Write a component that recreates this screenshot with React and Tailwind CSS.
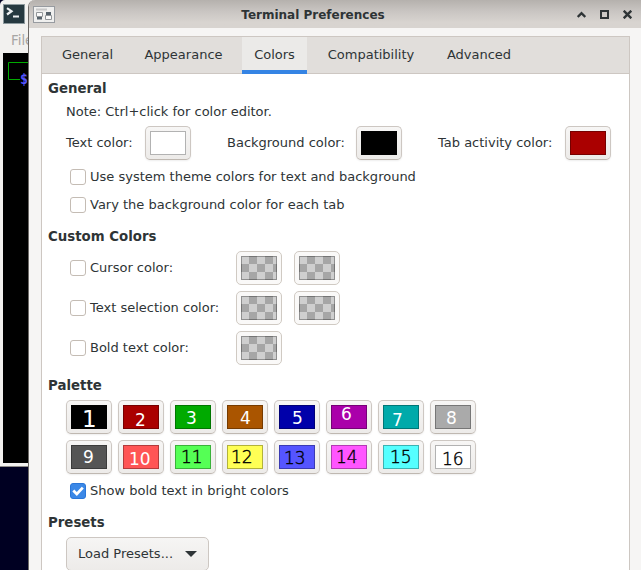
import React from "react";

const PALETTE = [
  { n: 1, fill: "bg-[#000000]", label: "left-[15px] top-[7px] text-[23px] text-white" },
  { n: 2, fill: "bg-[#aa0000]", label: "left-[16px] top-[11px] text-[17px] text-white" },
  { n: 3, fill: "bg-[#00aa00]", label: "left-[15px] top-[9px] text-[17px] text-white" },
  { n: 4, fill: "bg-[#aa5500]", label: "left-[17px] top-[9px] text-[17px] text-white" },
  { n: 5, fill: "bg-[#0000aa]", label: "left-[17px] top-[9px] text-[17px] text-white" },
  { n: 6, fill: "bg-[#aa00aa]", label: "left-[14px] top-[5px] text-[17px] text-white" },
  { n: 7, fill: "bg-[#00aaaa]", label: "left-[13px] top-[11px] text-[17px] text-white" },
  { n: 8, fill: "bg-[#aaaaaa]", label: "left-[15px] top-[9px] text-[17px] text-white" },
  { n: 9, fill: "bg-[#555555]", label: "left-[16px] top-[8px] text-[17px] text-white" },
  { n: 10, fill: "bg-[#ff5555]", label: "left-[10px] top-[10px] text-[17px] text-white" },
  { n: 11, fill: "bg-[#55ff55]", label: "left-[10px] top-[8px] text-[17px] font-extralight text-black [-webkit-text-stroke:0.4px]" },
  { n: 12, fill: "bg-[#ffff55]", label: "left-[8px] top-[8px] text-[17px] font-extralight text-black [-webkit-text-stroke:0.4px]" },
  { n: 13, fill: "bg-[#5555ff]", label: "left-[9px] top-[9px] text-[17px] font-extralight text-black [-webkit-text-stroke:0.4px]" },
  { n: 14, fill: "bg-[#ff55ff]", label: "left-[9px] top-[8px] text-[17px] font-extralight text-black [-webkit-text-stroke:0.4px]" },
  { n: 15, fill: "bg-[#55ffff]", label: "left-[11px] top-[8px] text-[17px] font-extralight text-black [-webkit-text-stroke:0.4px]" },
  { n: 16, fill: "bg-[#ffffff]", label: "left-[11px] top-[10px] text-[17px] font-extralight text-black [-webkit-text-stroke:0.4px]" },
];

const CHECKER =
  "bg-[repeating-conic-gradient(#a6a6a6_0_25%,#cfcfcf_0_50%)] bg-[length:16px_16px]";

function ColorButton({ fill, plain, children }) {
  return (
    <button
      className={`relative h-[34px] w-[46px] shrink-0 rounded-[5px] border p-1 ${
        plain
          ? "border-[#d0cac3] bg-[#faf9f8]"
          : "border-[#cdc7c2] border-b-[#bfb8b1] bg-linear-to-b from-[#f7f6f5] to-[#edebe9] shadow-[0_1px_2px_rgba(0,0,0,0.07)]"
      }`}
    >
      <span className={`block h-6 w-9 shadow-[inset_0_0_0_1px_rgba(0,0,0,0.3)] ${fill}`} />
      {children}
    </button>
  );
}

function Check({ checked, children }) {
  return (
    <label className="flex h-4 items-center">
      <span
        className={`flex size-4 shrink-0 items-center justify-center rounded-[3px] border ${
          checked ? "border-[#2a76d8] bg-[#3b88e7]" : "border-[#c4bcb4] bg-white"
        }`}
      >
        {checked && (
          <svg width="14" height="14" viewBox="0 0 14 14" fill="none" className="shrink-0">
            <path d="M2.3 6.5l3.5 3.4 6-6.3" stroke="#fff" strokeWidth="2.8" />
          </svg>
        )}
      </span>
      <span className="ml-1 whitespace-nowrap">{children}</span>
    </label>
  );
}

function Heading({ children }) {
  return <h2 className="h-4 text-[13.33px] font-bold leading-[18px]">{children}</h2>;
}

function CustomRow({ label, count }) {
  return (
    <div className="flex h-[34px] items-center">
      <div className="w-[166px] shrink-0">
        <Check>{label}</Check>
      </div>
      <div className="flex gap-3">
        {Array.from({ length: count }, (_, i) => (
          <ColorButton key={i} fill={CHECKER} plain />
        ))}
      </div>
    </div>
  );
}

function Tab({ width, active, children }) {
  return (
    <div
      className={`flex h-[37px] shrink-0 justify-center leading-[36px] ${width} ${
        active ? "bg-[#ebeae8] shadow-[inset_0_-4px_0_#3584e4]" : ""
      }`}
    >
      {children}
    </div>
  );
}

function TerminalWindow() {
  return (
    <div className="absolute left-0 top-0 h-[467px] w-[60px] rounded-tl-[5px] border-b border-[#8e8b87] bg-[#f2f1ef]">
      <div className="flex h-7 pl-[3px] pt-1">
        <svg width="22" height="20" viewBox="0 0 22 20">
          <rect x=".5" y=".5" width="21" height="19" fill="#263940" stroke="#8d9a9e" />
          <path d="M4 4.2l4.5 3L4 10.5" fill="none" stroke="#eef1f2" strokeWidth="2.2" />
          <path d="M10 12.5h6" stroke="#eef1f2" strokeWidth="2" />
        </svg>
      </div>
      <div className="h-[25px] pl-[11px] text-[13.33px] leading-[25px] text-[#a7a6a4]">File</div>
      <div className="relative ml-[3px] h-[410px] bg-black">
        <svg width="30" height="40" className="block">
          <path d="M30 9.5H5.5v17H17" fill="none" stroke="#00aa00" />
        </svg>
        <span className="absolute left-[17px] top-[19px] font-['DejaVu_Sans_Mono',monospace] text-[13.33px] font-bold leading-4 text-[#5555ff]">
          $
        </span>
      </div>
    </div>
  );
}

function PreferencesWindow() {
  return (
    <div className="absolute left-7 top-0 h-[570px] w-[613px] overflow-hidden rounded-tl-[7px] border-l border-[#6d6a67] bg-[#f6f5f4]">
      <header className="flex h-7 items-center bg-linear-to-b from-[#b5b1ad] via-[#c9c5c2] via-40% to-[#d8d4d0] to-80%">
        <svg width="22" height="18" viewBox="0 0 22 18" className="ml-1 mt-0.5 shrink-0">
          <rect x=".5" y=".5" width="21" height="16" fill="#efefee" stroke="#979ba0" />
          <path d="M3 3.5h11" stroke="#c8c8c8" strokeWidth="2" />
          <path d="M4 10.5h5v3H4zM13 6h5v3h-5z" fill="#56626b" />
          <path d="M3.5 6.5h6v4h-6zM12.5 9.5h6v4h-6z" fill="#fafafa" stroke="#929699" />
        </svg>
        <h1 className="flex-1 pr-1.5 pt-px text-center text-[12px] font-bold">Terminal Preferences</h1>
        <div className="flex w-16 shrink-0 gap-[14px] pt-px">
          <svg width="9" height="9" viewBox="0 0 9 9">
            <path d="M.7 7l3.8-3.8L8.3 7" fill="none" stroke="#2e3436" strokeWidth="2.4" />
          </svg>
          <svg width="9" height="9" viewBox="0 0 9 9">
            <path d="M1 1h7v7H1z" fill="none" stroke="#2e3436" strokeWidth="2" />
          </svg>
          <svg width="9" height="9" viewBox="0 0 9 9">
            <path d="M.7.7l7.6 7.6M8.3.7L.7 8.3" stroke="#2e3436" strokeWidth="2.4" />
          </svg>
        </div>
      </header>
      <main className="ml-3 mt-2 h-[560px] w-[589px] border border-[#cdc7c2] bg-white">
        <nav className="flex h-[37px] gap-2 border-b border-[#cdc7c2] bg-[#e1dedb] pl-2">
          <Tab width="w-[75px]">General</Tab>
          <Tab width="w-[101px]">Appearance</Tab>
          <Tab width="w-[65px]" active>Colors</Tab>
          <Tab width="w-[112px]">Compatibility</Tab>
          <Tab width="w-[88px]">Advanced</Tab>
        </nav>
        <div className="pl-1.5 pt-1.5">
          <Heading>General</Heading>
          <div className="ml-[18px]">
            <p className="mt-[7px] h-4 leading-[18px]">Note: Ctrl+click for color editor.</p>
            <div className="mt-[7px] flex h-[34px] items-center whitespace-nowrap">
              <span className="w-[79px] shrink-0">Text color:</span>
              <ColorButton fill="bg-white" />
              <span className="ml-9 w-[129px] shrink-0">Background color:</span>
              <ColorButton fill="bg-black" />
              <span className="ml-9 w-[127px] shrink-0">Tab activity color:</span>
              <ColorButton fill="bg-[#aa0000]" />
            </div>
            <div className="ml-1 mt-[9px] flex flex-col gap-3">
              <Check>Use system theme colors for text and background</Check>
              <Check>Vary the background color for each tab</Check>
            </div>
          </div>
          <div className="mt-[15px]">
            <Heading>Custom Colors</Heading>
          </div>
          <div className="ml-[22px] mt-[7px] flex flex-col gap-1.5">
            <CustomRow label="Cursor color:" count={2} />
            <CustomRow label="Text selection color:" count={2} />
            <CustomRow label="Bold text color:" count={1} />
          </div>
          <div className="mt-3">
            <Heading>Palette</Heading>
          </div>
          <div className="ml-[18px] mt-[7px] grid w-[410px] grid-cols-8 gap-1.5">
            {PALETTE.map(({ n, fill, label }) => (
              <ColorButton key={n} fill={fill}>
                <span className={`absolute leading-none ${label}`}>{n}</span>
              </ColorButton>
            ))}
          </div>
          <div className="ml-[22px] mt-[9px]">
            <Check checked>Show bold text in bright colors</Check>
          </div>
          <div className="mt-[15px]">
            <Heading>Presets</Heading>
          </div>
          <button className="ml-[18px] mt-[7px] flex h-[34px] w-[143px] items-center justify-between rounded-[5px] border border-[#cdc7c2] bg-linear-to-b from-[#f6f5f4] to-[#edebe9] pl-[11px] pr-[11px]">
            <span>Load Presets...</span>
            <svg width="12" height="6" viewBox="0 0 12 6">
              <path d="M0 0h12L6 6z" fill="#2e3436" />
            </svg>
          </button>
        </div>
      </main>
    </div>
  );
}

export default function App() {
  return (
    <div className="relative h-[570px] w-[641px] overflow-hidden bg-[#000022] font-['DejaVu_Sans',sans-serif] text-[13px] leading-4 text-[#2e3436]">
      <TerminalWindow />
      <PreferencesWindow />
    </div>
  );
}
